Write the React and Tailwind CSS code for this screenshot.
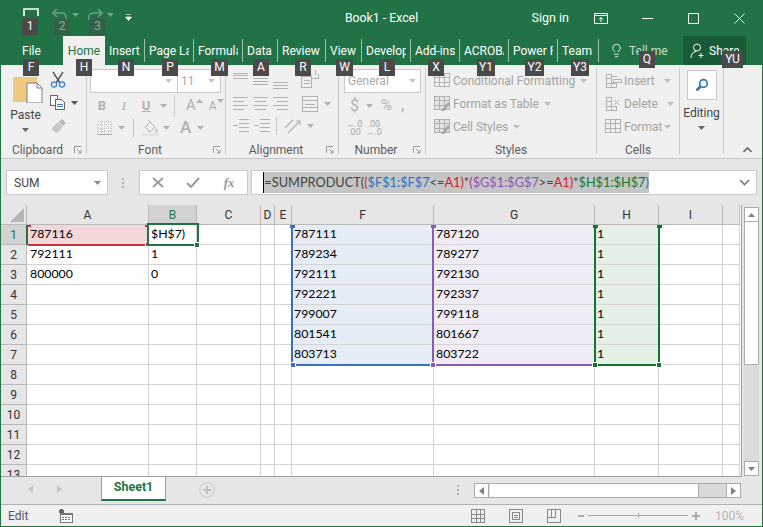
import { Lightbulb } from "lucide-react";

const UI = "font-['Roboto','Liberation_Sans',sans-serif]";
const GR = "#b2b2b2";

const tabs = [
  { name: "Insert", w: "w-[40px]" },
  { name: "Page Layout", w: "w-[49px]" },
  { name: "Formulas", w: "w-[49px]" },
  { name: "Data", w: "w-[35px]" },
  { name: "Review", w: "w-[48px]" },
  { name: "View", w: "w-[36px]" },
  { name: "Developer", w: "w-[49px]" },
  { name: "Add-ins", w: "w-[49px]" },
  { name: "ACROBAT", w: "w-[49px]" },
  { name: "Power Pivot", w: "w-[49px]" },
  { name: "Team", w: "w-[41px]" },
];

const keytips = [
  { t: "1", c: "left-[21px] top-[18px] w-[16px]" },
  { t: "2", c: "left-[53px] top-[18px] w-[16px] opacity-40" },
  { t: "3", c: "left-[88px] top-[18px] w-[17px] opacity-40" },
  { t: "F", c: "left-[22px] top-[59px] w-[16px]" },
  { t: "H", c: "left-[75px] top-[59px] w-[16px]" },
  { t: "N", c: "left-[117px] top-[59px] w-[16px]" },
  { t: "P", c: "left-[161px] top-[59px] w-[16px]" },
  { t: "M", c: "left-[210px] top-[59px] w-[17px]" },
  { t: "A", c: "left-[252px] top-[59px] w-[16px]" },
  { t: "R", c: "left-[294px] top-[59px] w-[16px]" },
  { t: "W", c: "left-[335px] top-[59px] w-[17px]" },
  { t: "L", c: "left-[378px] top-[59px] w-[16px]" },
  { t: "X", c: "left-[427px] top-[59px] w-[16px]" },
  { t: "Y1", c: "left-[476px] top-[59px] w-[18px]" },
  { t: "Y2", c: "left-[524px] top-[59px] w-[19px]" },
  { t: "Y3", c: "left-[570px] top-[59px] w-[18px]" },
  { t: "Q", c: "left-[638px] top-[51px] w-[16px]" },
  { t: "YU", c: "left-[721px] top-[51px] w-[21px]" },
];

const columns = ["A", "B", "C", "D", "E", "F", "G", "H", "I", ""];

const cellData = {
  A: ["787116", "792111", "800000"],
  B: ["$H$7)", "1", "0"],
  F: ["787111", "789234", "792111", "792221", "799007", "801541", "803713"],
  G: ["787120", "789277", "792130", "792337", "799118", "801667", "803722"],
  H: ["1", "1", "1", "1", "1", "1", "1"],
};

const tint = { F: "bg-[#e6edf7]", G: "bg-[#f0ecf6]", H: "bg-[#e4f0e6]" };

const Arrow = ({ c = GR, className = "" }) => (
  <svg width="7" height="4" viewBox="0 0 7 4" className={className}>
    <path d="M0 0h7L3.5 4z" fill={c} />
  </svg>
);

const Launcher = () => (
  <svg width="8" height="8" viewBox="0 0 8 8" className="shrink-0 mr-[4px]">
    <path d="M.5 7V.5H7" fill="none" stroke="#9a9a9a" />
    <path d="M3 3l4 4M7 4v3H4" fill="none" stroke="#9a9a9a" />
  </svg>
);

const Lines = ({ rows, w = 16, h = 16, c = GR }) => (
  <svg width={w} height={h} viewBox={`0 0 ${w} ${h}`} shapeRendering="crispEdges">
    {rows.map(([a, b, y]) => (
      <path key={`${a}-${y}`} d={`M${a} ${y}.5H${b}`} stroke={c} />
    ))}
  </svg>
);

const Group = ({ label, launcher, w, children }) => (
  <div className={`${w} h-[86px] border-r border-[#c9c9c9] flex flex-col shrink-0`}>
    <div className="h-[77px]">{children}</div>
    <div className="h-[9px] flex items-center">
      <div className="flex-1 text-center text-[12px] leading-[16px] text-[#5c5c5c]">{label}</div>
      {launcher && <Launcher />}
    </div>
  </div>
);

const StyleRow = ({ icon, label, arrowClass = "ml-[5px]" }) => (
  <div className="h-[23px] flex items-center text-[12px] text-[#a3a3a3]">
    <span className="w-[27px] pl-[8px] flex items-center">{icon}</span>
    <span className="whitespace-nowrap">{label}</span>
    <Arrow c="#bdbdbd" className={arrowClass} />
  </div>
);

const TableIcon = ({ brush }) => (
  <svg width="17" height="16" viewBox="0 0 17 16" shapeRendering="crispEdges">
    <rect x=".5" y=".5" width="15" height="13" fill={brush ? "#e3e3e3" : "#f0f0f0"} stroke={GR} />
    <path d="M.5 4.5h15M.5 9h15M5.5 1v13M10.5 1v13" stroke={GR} />
    {brush && <path d="M8 13l6-7 2 2-6 7H7z" fill="#a8a8a8" shapeRendering="auto" />}
  </svg>
);

const CellStack = ({ mark }) => (
  <svg width="17" height="16" viewBox="0 0 17 16" shapeRendering="crispEdges">
    <path d="M1.5 1.5h5v4h-5zM1.5 10.5h5v4h-5zM6.5 10.5h5v4h-5zM1.5 6v4M6.5 6v4" fill="none" stroke={GR} />
    {mark === "in" && <path d="M8 6.5h8v3H8z" fill="none" stroke={GR} />}
    {mark === "x" && <path d="M9 4l5 5M14 4l-5 5" stroke={GR} shapeRendering="auto" />}
    {mark === "in" && <path d="M7 3.5h5" stroke={GR} />}
  </svg>
);

const Line = ({ c }) => <div className={`absolute ${c}`} />;

const App = () => {
  return (
    <div className={`${UI} relative w-[763px] h-[527px] overflow-hidden flex flex-col bg-[#e6e6e6] border-x border-b border-[#217346]`}>
      {/* title bar */}
      <div className="h-[36px] shrink-0 bg-[#217346] grid grid-cols-[1fr_auto_1fr] items-center text-white text-[12.5px]">
        <div className="flex items-center h-full">
          <svg width="16" height="8" viewBox="0 0 16 8" className="ml-[22px] mb-[12px]">
            <path d="M1 8V1h14v7" fill="none" stroke="#fff" strokeWidth="1.6" />
          </svg>
          <svg width="16" height="14" viewBox="0 0 16 14" className="ml-[13px] mb-[6px] opacity-40">
            <path d="M1 5h9a4 4 0 0 1 4 4v3M5 1L1 5l4 4" fill="none" stroke="#cfe0d6" strokeWidth="1.6" />
          </svg>
          <Arrow c="#6fa488" className="ml-[4px] mb-[6px]" />
          <svg width="16" height="14" viewBox="0 0 16 14" className="ml-[8px] mb-[6px] opacity-40">
            <path d="M15 5H6a4 4 0 0 0-4 4v3M11 1l4 4-4 4" fill="none" stroke="#cfe0d6" strokeWidth="1.6" />
          </svg>
          <Arrow c="#6fa488" className="ml-[4px] mb-[6px]" />
          <svg width="7" height="7" viewBox="0 0 7 7" className="ml-[11px] mb-[1px]">
            <path d="M1 .5h5M0.5 3h6L3.5 6.5z" fill="#fff" stroke="#fff" strokeWidth=".6" />
          </svg>
        </div>
        <div className="text-[12.3px] whitespace-nowrap">Book1 - Excel</div>
        <div className="flex items-center justify-end h-full">
          <span className="mr-[9px] whitespace-nowrap">Sign in</span>
          <span className="w-[46px] flex justify-center">
            <svg width="14" height="11" viewBox="0 0 14 11">
              <path d="M.5.5h13v10H.5zM.5 2.5h13" fill="none" stroke="#fff" />
              <path d="M7 9V4.5M5 6.5l2-2 2 2" fill="none" stroke="#fff" />
            </svg>
          </span>
          <span className="w-[46px] flex justify-center">
            <svg width="11" height="1"><path d="M0 .5h11" stroke="#fff" /></svg>
          </span>
          <span className="w-[46px] flex justify-center">
            <svg width="11" height="11" viewBox="0 0 11 11"><path d="M.5.5h10v10H.5z" fill="none" stroke="#fff" /></svg>
          </span>
          <span className="w-[46px] flex justify-center">
            <svg width="11" height="11" viewBox="0 0 11 11"><path d="M.5.5l10 10M10.5.5l-10 10" stroke="#fff" /></svg>
          </span>
        </div>
      </div>

      {/* tabs */}
      <div className="h-[29px] shrink-0 bg-[#217346] flex text-[12px] text-white">
        <div className="w-[62px] pl-[21px] flex items-center">File</div>
        <div className="w-[42px] bg-[#f0f0f0] text-[#217346] flex items-center justify-center">Home</div>
        {tabs.map((t) => (
          <div key={t.name} className={`${t.w} h-[23px] mt-[3px] border-r border-[#9dc1ad] flex items-center px-[4px]`}>
            <div className="overflow-hidden whitespace-nowrap w-full">{t.name}</div>
          </div>
        ))}
        <div className="w-[84px] flex items-center text-[#c9dccf]">
          <Lightbulb size={15} strokeWidth={1.3} className="ml-[10px] mr-[5px] text-white" />
          <span>Tell me</span>
        </div>
        <div className="w-[63px] bg-[#185b37] flex items-center">
          <svg width="16" height="16" viewBox="0 0 16 16" className="ml-[7px] mr-[3px]">
            <circle cx="7" cy="4.5" r="3.5" fill="none" stroke="#fff" />
            <path d="M1 15c0-4 2-6 5-6.5M11 10v5M8.5 12.5h5" fill="none" stroke="#fff" />
          </svg>
          <span>Share</span>
        </div>
      </div>

      {/* ribbon */}
      <div className="h-[94px] shrink-0 bg-[#f0f0f0] border-b border-[#c6c6c6] pt-[3px] flex">
        <Group label="Clipboard" launcher w="w-[86px]">
          <div className="flex">
            <div className="w-[45px] flex flex-col items-center pt-[6px] pl-[4px]">
              <svg width="30" height="29" viewBox="0 0 30 29" className="ml-[4px]">
                <path d="M0 3h24v25H0z" fill="#efc982" />
                <path d="M14 9h10l5 5v15H14z" fill="#fff" stroke="#7d7d7d" />
                <path d="M24 9v5h5" fill="none" stroke="#7d7d7d" />
              </svg>
              <div className="text-[12px] leading-[16px] mt-[4px] text-[#444]">Paste</div>
              <Arrow c="#666" className="mt-[5px]" />
            </div>
            <div className="flex flex-col pl-[4px] pt-[3px]">
              <svg width="16" height="17" viewBox="0 0 16 17">
                <path d="M3 1l7 11M13 1L6 12" stroke="#555" strokeWidth="1.4" />
                <circle cx="4" cy="13.5" r="2.6" fill="none" stroke="#3f80c4" strokeWidth="1.3" />
                <circle cx="12" cy="13.5" r="2.6" fill="none" stroke="#3f80c4" strokeWidth="1.3" />
              </svg>
              <div className="flex items-center mt-[7px]">
                <svg width="16" height="15" viewBox="0 0 16 15" shapeRendering="crispEdges">
                  <path d="M.5.5h7v10h-7z" fill="#fff" stroke="#666" />
                  <path d="M5.5 4.5h6l3 3v7h-9z" fill="#fff" stroke="#666" />
                  <path d="M7 9h6M7 11h6" stroke="#3f80c4" />
                </svg>
                <Arrow c="#555" className="ml-[5px]" />
              </div>
              <svg width="17" height="16" viewBox="0 0 17 16" className="mt-[8px]">
                <path d="M2 10l6-6 5 5-6 6-5-3z" fill="#c6c6c6" />
                <path d="M9 4l3-3 4 4-3 3z" fill="#b8b8b8" />
              </svg>
            </div>
          </div>
        </Group>

        <Group label="Font" launcher w="w-[139px]">
          <div className="pl-[3px] pt-[1px]">
            <div className="flex h-[24px]">
              <div className="w-[88px] bg-white border border-[#c9c9c9] flex items-center justify-end pr-[5px]">
                <Arrow c="#c4c4c4" />
              </div>
              <div className="w-[43px] bg-white border-y border-r border-[#c9c9c9] flex items-center justify-between px-[3px] text-[12px] text-[#b0a8a8]">
                <span>11</span>
                <Arrow c="#c4c4c4" className="mr-[2px]" />
              </div>
            </div>
            <div className="flex items-center h-[19px] mt-[3px] text-[#b2b2b2] text-[13px] font-bold">
              <span className="w-[22px] text-center ml-[1px]">B</span>
              <span className="w-[22px] text-center italic font-normal font-['Liberation_Serif',serif]">I</span>
              <span className="w-[22px] text-center underline">U</span>
              <Arrow className="ml-[3px]" />
              <span className="w-px h-[22px] bg-[#c9c9c9] ml-[7px]" />
              <span className="ml-[11px] text-[15px] font-normal">A</span>
              <Arrow className="rotate-180 -mt-[10px]" />
              <span className="ml-[6px] text-[12px] font-normal">A</span>
              <Arrow className="-mt-[10px]" />
            </div>
            <div className="flex items-center h-[19px] mt-[3px]">
              <svg width="15" height="14" viewBox="0 0 15 14" className="ml-[7px]" shapeRendering="crispEdges">
                <path d="M.5.5h14v13H.5zM.5 7h14M7.5 1v12M4 1v12M11 1v12M1 3.5h13M1 10.5h13" fill="none" stroke="#c4c4c4" strokeDasharray="1 1" />
                <path d="M.5 13.5h14" stroke="#a8a8a8" />
              </svg>
              <Arrow className="ml-[6px]" />
              <span className="w-px h-[18px] bg-[#c9c9c9] ml-[8px]" />
              <svg width="17" height="17" viewBox="0 0 17 17" className="ml-[8px]">
                <path d="M3 8l5-5 5 5-5 5zM6 1l3 3" fill="none" stroke={GR} />
                <path d="M14 9c1 2 2 3 1 4s-2 0-1-4z" fill={GR} />
                <path d="M0 14h17v3H0z" fill="#e4e4e4" />
              </svg>
              <Arrow className="ml-[4px]" />
              <span className="ml-[10px] text-[17px] leading-[17px] text-[#b2b2b2] font-medium">A</span>
              <Arrow className="ml-[6px]" />
            </div>
          </div>
        </Group>

        <Group label="Alignment" launcher w="w-[113px]">
          <div className="pl-[7px]">
            <div className="flex items-start h-[25px] pt-[2px] gap-[5px]">
              <Lines w={15} h={20} rows={[[0, 15, 3], [0, 15, 5], [0, 15, 8]]} />
              <Lines w={15} h={20} rows={[[0, 15, 8], [0, 15, 11], [0, 15, 14]]} />
              <Lines w={15} h={20} rows={[[0, 15, 12], [0, 15, 15], [0, 15, 18]]} />
              <svg width="18" height="18" viewBox="0 0 18 18" className="ml-[8px]" shapeRendering="crispEdges">
                <path d="M.5 6.5h10v11H.5z" fill="none" stroke={GR} />
                <path d="M3 10.5h6M3 13.5h6M11 8.5h6V4M14 5V0" stroke={GR} fill="none" />
              </svg>
            </div>
            <div className="flex items-center h-[19px] mt-[1px] gap-[5px]">
              <Lines w={15} h={15} rows={[[0, 15, 1], [0, 11, 5], [0, 15, 9], [0, 11, 13]]} />
              <Lines w={15} h={15} rows={[[0, 15, 1], [2, 13, 5], [0, 15, 9], [2, 13, 13]]} />
              <Lines w={15} h={15} rows={[[0, 15, 1], [4, 15, 5], [0, 15, 9], [4, 15, 13]]} />
              <svg width="16" height="16" viewBox="0 0 16 16" className="ml-[9px]" shapeRendering="crispEdges">
                <path d="M.5.5h15v15H.5zM.5 4.5h15M.5 11.5h15M3 8h10" fill="none" stroke={GR} />
              </svg>
              <Arrow className="ml-[1px]" />
            </div>
            <div className="flex items-center h-[19px] mt-[3px] gap-[5px]">
              <Lines w={16} h={15} rows={[[6, 16, 1], [6, 16, 5], [6, 16, 9], [6, 16, 13], [0, 5, 7]]} />
              <Lines w={16} h={15} rows={[[6, 16, 1], [6, 16, 5], [6, 16, 9], [6, 16, 13], [0, 5, 7]]} />
              <span className="w-px h-[18px] bg-[#c9c9c9] ml-[1px]" />
              <svg width="17" height="16" viewBox="0 0 17 16" className="ml-[2px]">
                <path d="M1 10l8-8M4 15l12-12M16 3h-4M16 3v4" fill="none" stroke={GR} strokeWidth="1.2" />
              </svg>
              <Arrow className="ml-[1px]" />
            </div>
          </div>
        </Group>

        <Group label="Number" launcher w="w-[87px]">
          <div className="pl-[5px] pt-[1px]">
            <div className="w-[77px] h-[24px] bg-white border border-[#c9c9c9] flex items-center justify-between pl-[3px] pr-[4px] text-[12px] text-[#aaa]">
              <span>General</span>
              <Arrow c="#c4c4c4" />
            </div>
            <div className="flex items-center h-[19px] mt-[3px] text-[#b2b2b2]">
              <span className="ml-[6px] text-[16px]">$</span>
              <Arrow className="ml-[7px]" />
              <span className="ml-[8px] text-[15px]">%</span>
              <span className="ml-[9px] text-[14px] font-bold">,</span>
            </div>
            <div className="flex items-center h-[19px] mt-[3px] text-[#a8a8a8] text-[9px] leading-[8px] gap-[3px] pl-[2px]">
              <span>←.0<br />&nbsp;.00</span>
              <span>&nbsp;.00<br />→.0</span>
            </div>
          </div>
        </Group>

        <Group label="Styles" w="w-[171px]">
          <div className="pt-[1px]">
            <StyleRow icon={<TableIcon />} label="Conditional Formatting" />
            <StyleRow icon={<TableIcon brush />} label="Format as Table" />
            <StyleRow icon={<TableIcon brush />} label="Cell Styles" />
          </div>
        </Group>

        <Group label="Cells" w="w-[83px]">
          <div className="pt-[1px]">
            <StyleRow icon={<CellStack mark="in" />} label="Insert" arrowClass="ml-[9px]" />
            <StyleRow icon={<CellStack mark="x" />} label="Delete" arrowClass="ml-[9px]" />
            <StyleRow icon={<TableIcon />} label="Format" arrowClass="ml-[2px]" />
          </div>
        </Group>

        <div className="w-[44px] h-[86px] border-r border-[#c9c9c9] flex flex-col items-center shrink-0">
          <div className="w-[30px] h-[30px] mt-[2px] bg-white border border-[#c9c9c9] flex items-center justify-center">
            <svg width="14" height="14" viewBox="0 0 14 14">
              <circle cx="8.5" cy="5.5" r="3.8" fill="none" stroke="#2f78bd" strokeWidth="1.7" />
              <path d="M5.5 8.5L1.5 12.5" stroke="#2f78bd" strokeWidth="2.6" />
            </svg>
          </div>
          <div className="text-[12px] leading-[16px] mt-[5px] text-[#444]">Editing</div>
          <Arrow c="#666" className="mt-[5px]" />
        </div>
        <div className="flex-1 flex items-end justify-end pr-[10px] pb-[5px]">
          <svg width="9" height="6" viewBox="0 0 9 6">
            <path d="M.5 5l4-4 4 4" fill="none" stroke="#666" strokeWidth="1.6" />
          </svg>
        </div>
      </div>

      {/* formula bar */}
      <div className="h-[25px] mt-[11px] shrink-0 flex items-stretch pl-[5px] pr-[5px]">
        <div className="w-[102px] bg-white border border-[#c9c9c9] flex items-center justify-between pl-[7px] pr-[6px] text-[12px] text-[#444]">
          <span>SUM</span>
          <Arrow c="#888" />
        </div>
        <div className="w-[31px] flex flex-col items-center justify-center gap-[2px]">
          <span className="w-[2px] h-[2px] bg-[#b0b0b0]" />
          <span className="w-[2px] h-[2px] bg-[#b0b0b0]" />
          <span className="w-[2px] h-[2px] bg-[#b0b0b0]" />
        </div>
        <div className="w-[110px] bg-white border border-[#c9c9c9] flex items-center text-[#9a9a9a]">
          <svg width="12" height="11" viewBox="0 0 12 11" className="ml-[12px]">
            <path d="M1 1l10 9M11 1L1 10" stroke="#9a9a9a" strokeWidth="1.8" />
          </svg>
          <svg width="14" height="11" viewBox="0 0 14 11" className="ml-[22px]">
            <path d="M1 6l4 4 8-9" fill="none" stroke="#9a9a9a" strokeWidth="2" />
          </svg>
          <span className="ml-[24px] italic text-[13px] font-['Liberation_Serif',serif] font-bold">fx</span>
        </div>
        <div className="w-[507px] ml-[3px] bg-white border border-[#c9c9c9] flex items-center justify-between pl-[11px] pr-[4px]">
          <div className="h-[21px] bg-[#c5c5c5] border-l border-black flex items-center text-[12.75px] whitespace-nowrap font-['Lato',sans-serif] text-[#444]">
            <span>=SUMPRODUCT(</span>
            <span className="text-[#d0202a]">(</span>
            <span className="text-[#2f6fc4]">$F$1:$F$7</span>
            <span>&lt;=</span>
            <span className="text-[#d0202a]">A1)</span>
            <span>*</span>
            <span className="text-[#b0308a]">(</span>
            <span className="text-[#8a55b5]">$G$1:$G$7</span>
            <span>&gt;=</span>
            <span className="text-[#d0202a]">A1)</span>
            <span>*</span>
            <span className="text-[#0f7a2e]">$H$1:$H$7</span>
            <span className="text-[#2f6fc4]">)</span>
          </div>
          <svg width="11" height="7" viewBox="0 0 11 7" className="mr-[2px]">
            <path d="M1 1l4.5 4.5L10 1" fill="none" stroke="#777" strokeWidth="1.6" />
          </svg>
        </div>
      </div>

      {/* sheet */}
      <div className="mt-[10px] h-[272px] shrink-0 flex">
        <div className="relative w-[741px] h-full overflow-hidden bg-white border-r border-b border-[#9f9f9f]">
          <div className="grid grid-cols-[26px_122px_48px_64px_14px_17px_142px_161px_64px_64px_17px] auto-rows-[20px] text-[12.3px] font-['Lato',sans-serif] text-black">
            <div className="bg-[#e6e6e6] border-r border-b border-[#b8b8b8] flex items-end justify-end p-[2px]">
              <svg width="14" height="14" viewBox="0 0 14 14"><path d="M14 0v14H0z" fill="#b5b5b5" /></svg>
            </div>
            {columns.map((c) => (
              <div key={`head-${c}`} className={`${c === "B" ? "bg-[#d2d2d2] text-[#217346]" : "bg-[#e6e6e6] text-[#333]"} border-r border-b border-[#b8b8b8] flex items-center justify-center text-[12px] font-['Roboto',sans-serif]`}>
                {c}
              </div>
            ))}
            {[1, 2, 3, 4, 5, 6, 7, 8, 9, 10, 11, 12, 13].map((r) => (
              <div key={r} className="contents">
                <div className={`${r === 1 ? "bg-[#d2d2d2] text-[#217346]" : "bg-[#e6e6e6] text-[#333]"} border-r border-b border-[#b8b8b8] flex items-center justify-center text-[12px] font-['Roboto',sans-serif]`}>
                  {r}
                </div>
                {columns.map((c) => {
                  const v = cellData[c] ? cellData[c][r - 1] : undefined;
                  let bg = "";
                  if (tint[c] && r <= 7) bg = tint[c];
                  if (c === "A" && r === 1) bg = "bg-[#f4d8d9]";
                  return (
                    <div key={c} className={`${bg} ${c === "A" ? "pl-[3px]" : "pl-[2px]"} border-r border-b border-[#d4d4d4] flex items-center overflow-hidden whitespace-nowrap`}>
                      {v}
                    </div>
                  );
                })}
              </div>
            ))}
          </div>

          {/* reference highlights lie over the cells */}
          <Line c="left-[25px] top-[20px] w-[2px] h-[20px] bg-[#217346]" />
          <Line c="left-[27px] top-[39px] w-[120px] h-[2px] bg-[#c0353e]" />
          <Line c="left-[27px] top-[20px] w-[3px] h-[2px] bg-[#c0353e]" />
          <Line c="left-[144px] top-[20px] w-[3px] h-[2px] bg-[#c0353e]" />
          <Line c="left-[144px] top-[37px] w-[5px] h-[5px] bg-[#c0353e] border border-white" />
          <div className="absolute left-[146px] top-[18px] w-[52px] h-[23px] border-2 border-[#217346]" />
          <Line c="left-[193px] top-[37px] w-[6px] h-[6px] bg-[#217346] border border-white" />

          <Line c="left-[290px] top-[20px] w-[2px] h-[140px] bg-[#3a6fc4]" />
          <Line c="left-[290px] top-[159px] w-[143px] h-[2px] bg-[#3a6fc4]" />
          <Line c="left-[289px] top-[20px] w-[5px] h-[3px] bg-[#3a6fc4]" />
          <Line c="left-[289px] top-[157px] w-[6px] h-[6px] bg-[#3a6fc4] border border-white" />

          <Line c="left-[431px] top-[20px] w-[2px] h-[140px] bg-[#8a5cb8]" />
          <Line c="left-[432px] top-[159px] w-[162px] h-[2px] bg-[#8a5cb8]" />
          <Line c="left-[430px] top-[20px] w-[5px] h-[3px] bg-[#8a5cb8]" />
          <Line c="left-[429px] top-[157px] w-[6px] h-[6px] bg-[#8a5cb8] border border-white" />

          <Line c="left-[593px] top-[20px] w-[2px] h-[140px] bg-[#0a7a2a]" />
          <Line c="left-[657px] top-[20px] w-[2px] h-[140px] bg-[#0a7a2a]" />
          <Line c="left-[593px] top-[159px] w-[66px] h-[2px] bg-[#0a7a2a]" />
          <Line c="left-[592px] top-[20px] w-[5px] h-[3px] bg-[#0a7a2a]" />
          <Line c="left-[656px] top-[20px] w-[5px] h-[3px] bg-[#0a7a2a]" />
          <Line c="left-[591px] top-[157px] w-[6px] h-[6px] bg-[#0a7a2a] border border-white" />
          <Line c="left-[655px] top-[157px] w-[6px] h-[6px] bg-[#0a7a2a] border border-white" />
        </div>

        <div className="w-[15px] ml-[2px] mt-[2px] mb-[1px] flex flex-col">
          <div className="h-[15px] bg-white border border-[#ababab] flex items-center justify-center">
            <Arrow c="#808080" className="rotate-180" />
          </div>
          <div className="h-[143px] bg-white border-x border-b border-[#ababab]" />
          <div className="flex-1 bg-[#dbdbdb]" />
          <div className="h-[15px] bg-white border border-[#ababab] flex items-center justify-center">
            <Arrow c="#808080" />
          </div>
        </div>
      </div>

      {/* sheet tabs */}
      <div className="h-[27px] shrink-0 flex items-start">
        <div className="w-[100px] h-[24px] flex items-center">
          <svg width="5" height="8" viewBox="0 0 5 8" className="ml-[27px]"><path d="M5 0v8L0 4z" fill="#c4c4c4" /></svg>
          <svg width="5" height="8" viewBox="0 0 5 8" className="ml-[24px]"><path d="M0 0v8l5-4z" fill="#c4c4c4" /></svg>
        </div>
        <div className="w-[65px] h-[25px] -mt-px bg-white border-x border-b-2 border-x-[#9f9f9f] border-b-[#217346] flex items-center justify-center text-[12.5px] font-bold text-[#217346]">
          Sheet1
        </div>
        <svg width="16" height="16" viewBox="0 0 16 16" className="ml-[33px] mt-[5px]">
          <circle cx="8" cy="8" r="7.3" fill="none" stroke="#c6c6c6" />
          <path d="M8 4v8M4 8h8" stroke="#c0c0c0" strokeWidth="2" />
        </svg>
        <div className="ml-[242px] mt-[8px] flex flex-col gap-[2px]">
          <span className="w-[2px] h-[2px] bg-[#b0b0b0]" />
          <span className="w-[2px] h-[2px] bg-[#b0b0b0]" />
          <span className="w-[2px] h-[2px] bg-[#b0b0b0]" />
        </div>
        <div className="ml-[15px] mt-[6px] w-[267px] h-[15px] bg-[#d9d9d9] border border-[#ababab] flex">
          <span className="w-[14px] bg-white border-r border-[#ababab] flex items-center justify-center">
            <svg width="5" height="8" viewBox="0 0 5 8"><path d="M5 0v8L0 4z" fill="#808080" /></svg>
          </span>
          <span className="w-[209px] ml-px bg-white border-r border-[#ababab]" />
          <span className="flex-1" />
          <span className="w-[14px] bg-white border-l border-[#ababab] flex items-center justify-center">
            <svg width="5" height="8" viewBox="0 0 5 8"><path d="M0 0v8l5-4z" fill="#808080" /></svg>
          </span>
        </div>
      </div>

      {/* status bar */}
      <div className="h-[22px] shrink-0 bg-[#f0f0f0] border-t border-[#b0b0b0] flex items-center text-[12px] text-[#555]">
        <span className="ml-[7px] w-[51px]">Edit</span>
        <svg width="14" height="14" viewBox="0 0 14 14" shapeRendering="crispEdges">
          <rect x="0" y="0" width="5" height="5" rx="2.5" fill="#666" />
          <path d="M1 4.5h12.5v9H1z" fill="#fff" stroke="#777" />
          <path d="M1 4h13v2H1z" fill="#777" />
          <path d="M3 8h2M6 8h2M9 8h2M3 10h2M6 10h2M9 10h2" stroke="#777" />
        </svg>
        <svg width="14" height="14" viewBox="0 0 14 14" className="ml-[398px]" shapeRendering="crispEdges">
          <path d="M.5.5h13v13H.5zM.5 5h13M.5 9.5h13M5 1v13M9.5 1v13" fill="none" stroke="#888" />
        </svg>
        <svg width="14" height="14" viewBox="0 0 14 14" className="ml-[24px]" shapeRendering="crispEdges">
          <path d="M.5.5h13v13H.5z" fill="none" stroke="#888" />
          <path d="M3.5 3.5h7v7h-7zM5 6h4M5 8h4" fill="none" stroke="#888" />
        </svg>
        <svg width="14" height="14" viewBox="0 0 14 14" className="ml-[24px]" shapeRendering="crispEdges">
          <path d="M.5.5h13v13H.5zM.5 8.5h8V.5M4.5 1v7" fill="none" stroke="#888" />
        </svg>
        <span className="ml-[17px] w-[6px] h-[2px] bg-[#aaa]" />
        <div className="ml-[4px] w-[100px] h-[1px] bg-[#aaa] flex justify-center items-center">
          <span className="w-px h-[5px] bg-[#aaa]" />
        </div>
        <svg width="8" height="8" viewBox="0 0 8 8" className="ml-[4px]"><path d="M4 0v8M0 4h8" stroke="#aaa" strokeWidth="2" /></svg>
        <span className="ml-[15px] text-[#b4b4b4]">100%</span>
      </div>

      {/* access key tips lie over the ribbon */}
      {keytips.map((k) => (
        <div key={k.t} className={`absolute ${k.c} h-[17px] bg-[#4a4a4a] text-white text-[12px] leading-[17px] text-center`}>
          {k.t}
        </div>
      ))}
    </div>
  );
};

export default App;
